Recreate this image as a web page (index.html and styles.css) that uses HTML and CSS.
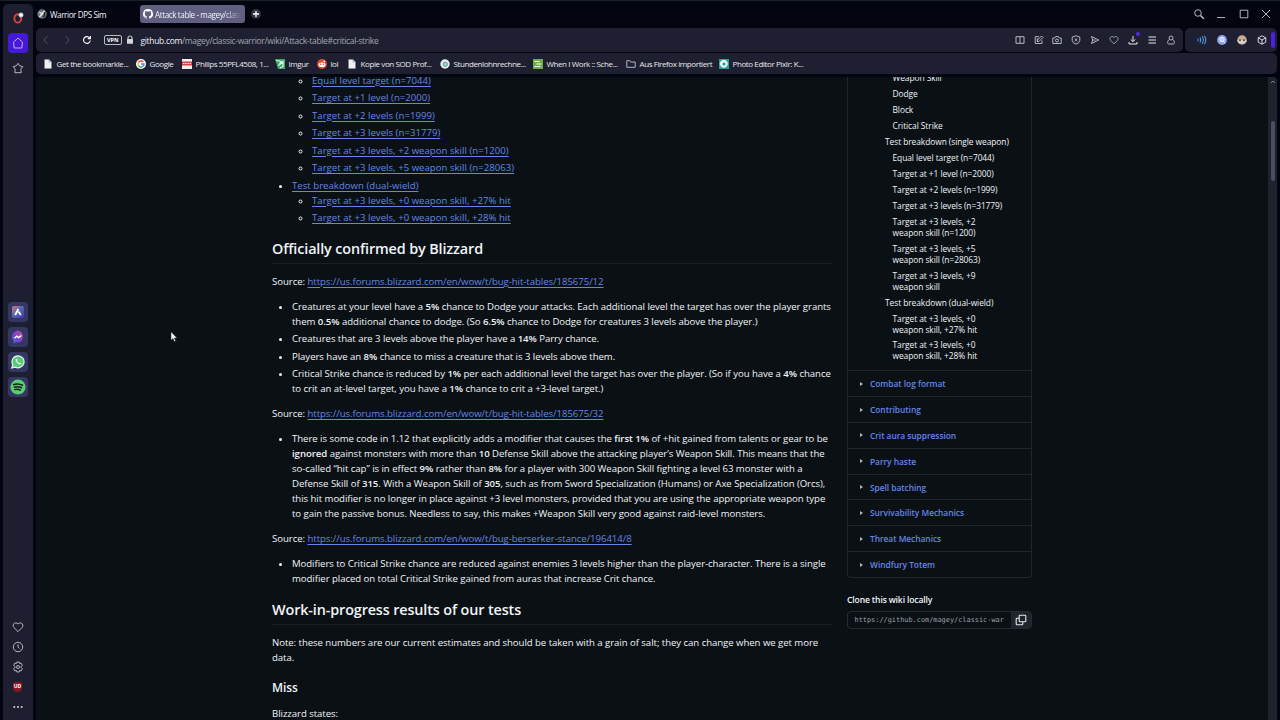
FILE: index.html
```html
<!DOCTYPE html>
<html lang="en">
<head>
    <meta charset="UTF-8">
    <meta name="viewport" content="width=device-width, initial-scale=1.0">
    <title>Attack table - magey/classic-warrior Wiki</title>
    <link rel="stylesheet" href="styles.css">
</head>
<body>
    <div class="browser">
        <!-- Left browser sidebar -->
        <aside class="rail">
            <div class="rail-group">
                <div class="rail-item">
                    <svg class="icon-12" viewBox="0 0 12 12"><ellipse cx="5.8" cy="6.4" rx="3.4" ry="4.2" fill="none" stroke="#d8403f" stroke-width="2"/><circle cx="9" cy="3" r="2.1" fill="#fff"/></svg>
                </div>
                <div class="rail-item home">
                    <svg class="icon-12" viewBox="0 0 12 12"><path d="M1.5 5.2 6 1l4.500 4.200-.7 5.800H2.200z"/></svg>
                </div>
                <div class="rail-item">
                    <svg class="icon-12" viewBox="0 0 12 12"><path d="m6 1.300 1.600 2.500 3.200.8-2 2.500.4 3.600H2.800l.4-3.600-2-2.500 3.200-.8z"/></svg>
                </div>
            </div>
            <div class="rail-group apps">
                <div class="rail-item app">
                    <svg class="icon-14" viewBox="0 0 14 14">
                        <defs><linearGradient id="aria" x1="0" y1="0" x2="1" y2="1"><stop offset="0" stop-color="#d27a6c"/><stop offset=".5" stop-color="#5068b8"/><stop offset="1" stop-color="#4a2fb0"/></linearGradient></defs>
                        <rect x="1" y="1" width="12" height="12" rx="2" fill="url(#aria)" stroke="none"/>
                        <path d="M4.200 10 7.300 4M7.500 6.500 9.800 10" stroke="#fff" stroke-width="1.800"/>
                    </svg>
                </div>
                <div class="rail-item app">
                    <svg class="icon-14" viewBox="0 0 14 14">
                        <defs><linearGradient id="msg" x1="1" y1="0" x2="0" y2="1"><stop offset="0" stop-color="#d2508c"/><stop offset=".5" stop-color="#8040c8"/><stop offset="1" stop-color="#3c6ae0"/></linearGradient></defs>
                        <path d="M7 .8a6 6 0 0 1 0 11.800l-2-.3-2.500 1V10.800A6 6 0 0 1 7 .8z" fill="url(#msg)" stroke="none"/>
                        <path d="m3.500 8.300 2.300-2.200 2 1.400 2.500-2" stroke="#fff" stroke-width="1.500"/>
                    </svg>
                </div>
                <div class="rail-item app">
                    <svg class="icon-14" viewBox="0 0 14 14">
                        <path d="M7.200.8a6 6 0 1 1-3 11.300L.8 13l1-3.200A6 6 0 0 1 7.200.8z" fill="#58cb75" stroke="#e8f4ea" stroke-width="1.200"/>
                        <path d="M4.700 4.500c-.3 2 2.700 5.200 4.800 5l.8-1.200-1.600-.9-.8.7C7 7.700 6.300 7 6 6.200l.7-.8-.8-1.600z" fill="#fff" stroke="none"/>
                    </svg>
                </div>
                <div class="rail-item app">
                    <svg class="icon-16" viewBox="0 0 16 16">
                        <circle cx="8" cy="8" r="7.600" fill="#5ccb73" stroke="none"/>
                        <path d="M3 5.700c3.500-1.100 7.200-.8 10 .8M3.700 8.200c3-.9 6-.6 8.300.8M4.300 10.600c2.400-.7 4.700-.4 6.500.7" stroke="#112018" stroke-width="1.500"/>
                    </svg>
                </div>
            </div>
            <div class="rail-group bottom">
                <div class="rail-item"><svg class="icon-12" viewBox="0 0 12 12"><path d="M6 10.600 1.900 6.500C-.3 4 2.800-.2 6 3c3.200-3.200 6.300 1 4.100 3.500z"/></svg></div>
                <div class="rail-item"><svg class="icon-12" viewBox="0 0 12 12"><circle cx="6" cy="6" r="4.700"/><path d="M6 3.300V6l1.500 1.500"/></svg></div>
                <div class="rail-item"><svg class="icon-12" viewBox="0 0 12 12"><path d="m4.800 1h2.400l.4 1.500 1.500-.4 1.200 2.100L9.200 5.300v1.400l1.100 1.100-1.200 2.100-1.500-.4-.4 1.500H4.800l-.4-1.500-1.500.4-1.200-2.100 1.100-1.100V5.300L1.700 4.200l1.200-2.100 1.500.4z"/><circle cx="6" cy="6" r="1.500"/></svg></div>
                <div class="rail-item"><span class="shield">UD</span></div>
                <div class="rail-item"><svg class="icon-12" viewBox="0 0 12 12"><g fill="#d0d2da" stroke="none"><circle cx="2.300" cy="6" r="1"/><circle cx="6" cy="6" r="1"/><circle cx="9.700" cy="6" r="1"/></g></svg></div>
            </div>
        </aside>

        <div class="window">
            <!-- Tabs -->
            <div class="tabs">
                <div class="tab">
                    <svg class="icon-10" viewBox="0 0 10 10"><circle cx="5" cy="5" r="4.700" fill="#70757c" stroke="none"/><path d="m2.500 8 5-6M2.300 3.500l3.200 1.200" stroke="#eee" stroke-width="1.300"/><path d="M7.500 3v3.500L6 8" stroke="#222" stroke-width="1.200"/></svg>
                    <span>Warrior DPS Sim</span>
                </div>
                <div class="tab active">
                    <svg class="icon-10" viewBox="0 0 16 16"><path fill="#fff" stroke="none" d="M8 0a8 8 0 0 0-2.530 15.590c.4.070.55-.17.55-.38v-1.490c-2.010.37-2.530-.49-2.690-.94-.09-.23-.48-.94-.82-1.130-.28-.15-.68-.52-.01-.53.630-.01 1.080.58 1.230.82.72 1.210 1.870.87 2.330.66.07-.52.28-.87.51-1.070-1.780-.2-3.640-.89-3.640-3.950 0-.87.31-1.590.82-2.150-.08-.2-.36-1.020.08-2.120 0 0 .67-.21 2.200.82a7.500 7.500 0 0 1 4 0c1.530-1.040 2.200-.82 2.200-.82.44 1.100.16 1.920.08 2.120.51.56.82 1.270.82 2.150 0 3.070-1.870 3.750-3.650 3.950.29.25.54.73.54 1.480v2.200c0 .21.15.46.55.38A8 8 0 0 0 8 0z"/></svg>
                    <span>Attack table - magey/class</span>
                </div>
                <div class="new-tab"><svg class="icon-10" viewBox="0 0 10 10"><path d="M5 2v6M2 5h6" stroke="#fff" stroke-width="1.300"/></svg></div>
                <div class="window-controls">
                    <svg class="icon-12" viewBox="0 0 12 12"><circle cx="5" cy="5" r="3.300"/><path d="m7.500 7.500 3.300 3.300" stroke-width="1.400"/></svg>
                    <svg class="icon-12" viewBox="0 0 12 12"><path d="M2 9.500h8"/></svg>
                    <svg class="icon-12" viewBox="0 0 12 12"><path d="M2.200 2.200h7.600v7.600H2.200z"/></svg>
                    <svg class="icon-12" viewBox="0 0 12 12"><path d="m2 2 8 8m0-8-8 8"/></svg>
                </div>
            </div>

            <!-- Address bar -->
            <div class="toolbar">
                <div class="address">
                    <div class="nav">
                        <svg class="icon-10 dim" viewBox="0 0 10 10"><path d="M6 1.500 3 5l3 3.500"/></svg>
                        <svg class="icon-10 dim" viewBox="0 0 10 10"><path d="m4 1.500 3 3.500-3 3.500"/></svg>
                        <svg class="icon-10" viewBox="0 0 10 10"><path d="M8.300 5.500A3.400 3.400 0 1 1 7.700 3M8.400 1v2.600H5.800" stroke="#fff" stroke-width="1.100"/></svg>
                    </div>
                    <span class="vpn">VPN</span>
                    <svg class="lock" viewBox="0 0 8 10"><path d="M2 4.500V3a2 2 0 0 1 4 0v1.500" stroke-width="1.200"/><rect x="1" y="4" width="6" height="4.700" rx=".5" fill="#d5d6dc" stroke="none"/></svg>
                    <span class="url"><b>github.com</b>/magey/classic-warrior/wiki/Attack-table#critical-strike</span>
                    <div class="actions">
                        <svg class="icon-10" viewBox="0 0 10 10"><path d="M1 1.700h8v6.600H1zM5 1.700v6.600"/></svg>
                        <svg class="icon-10" viewBox="0 0 10 10"><path d="M5 1.700H1.200v6.800H8V5.500M3.500 6.500V5l4-4L9 2.500l-4 4zM3.300 3.300v3.500"/></svg>
                        <svg class="icon-10" viewBox="0 0 10 10"><path d="M.8 3h2L3.700 1.500h2.600L7.200 3h2v5.500H.8z"/><circle cx="5" cy="5.500" r="1.500"/></svg>
                        <svg class="icon-10" viewBox="0 0 10 10"><path d="M5 .8 8.800 2v3.500Q8.500 8 5 9.200 1.500 8 1.200 5.500V2zM3.700 3.500l2.600 2.600m0-2.600L3.700 6.100"/></svg>
                        <svg class="icon-10" viewBox="0 0 10 10"><path d="M1.500 1.500 8.700 5 1.500 8.500 2.700 5zM2.700 5h3"/></svg>
                        <svg class="icon-10" viewBox="0 0 12 12"><path d="M6 10.600 1.900 6.500C-.3 4 2.800-.2 6 3c3.200-3.200 6.300 1 4.100 3.500z"/></svg>
                        <span class="download">
                            <svg class="icon-10" viewBox="0 0 10 10"><path d="M5 1v5.500M2.800 4.500 5 6.700l2.200-2.200M1 7v2h8V7" stroke="#fff"/></svg>
                        </span>
                        <svg class="icon-10" viewBox="0 0 10 10"><path d="M1.500 2h7.500M1.500 5h7.500M1.500 8h7.500" stroke="#fff"/></svg>
                        <svg class="icon-10" viewBox="0 0 10 10"><circle cx="5" cy="3" r="2"/><path d="M3.500 4.500C.6 6 1.800 9 2.500 9h5c.7 0 1.900-3-1-4.500"/></svg>
                    </div>
                </div>
                <div class="extensions">
                    <svg class="icon-10" viewBox="0 0 10 10"><path d="M1 3.800v2.400M3 2.500q1.200 2.500 0 5M5.300 1.300q2 3.700 0 7.400M7.500.8q2.500 4.200 0 8.400" stroke="#4f9be8" stroke-width="1.100"/></svg>
                    <svg class="icon-10" viewBox="0 0 10 10"><circle cx="5" cy="5" r="4.900" fill="#8ea2ec" stroke="none"/><circle cx="5" cy="4.500" r="2.200" fill="#bfd0ff" stroke="#f3f6ff"/><path d="M6.500 6.300 8 8" stroke="#f3f6ff"/></svg>
                    <svg class="icon-10" viewBox="0 0 10 10"><circle cx="5" cy="5" r="4.700" fill="#c9ad8a" stroke="none"/><path d="M.6 5h8.800v1.300a4.500 3 0 0 1-8.800 0z" fill="#d6d2cf" stroke="none"/><circle cx="3" cy="5.300" r="1" fill="#56483e" stroke="none"/><circle cx="7" cy="5.300" r="1" fill="#56483e" stroke="none"/></svg>
                    <svg class="icon-10" viewBox="0 0 10 10"><path d="M5 .8 8.800 2.800v4.400L5 9.200 1.200 7.200V2.800zM1.200 2.800 5 5l3.800-2.200M5 5v4.200" stroke="#e8e8ee"/></svg>
                    <span class="handle"></span>
                </div>
            </div>

            <!-- Bookmarks -->
            <div class="bookmarks">
                <div class="bookmark long"><svg class="icon-10" viewBox="0 0 10 10"><path d="M1.500.5h4.500l2.500 2.500v6.500h-7z" fill="#eef0f4" stroke="none"/><path d="M6 .5V3h2.500" stroke="#8c90a0" stroke-width=".6"/></svg><span>Get the bookmarkle...</span></div>
                <div class="bookmark google"><svg class="icon-10" viewBox="0 0 10 10"><circle cx="5" cy="5" r="5" fill="#fff" stroke="none"/><path d="M7.300 3A3 3 0 0 0 2.400 3.500" stroke="#ea4335" stroke-width="1.400"/><path d="M2.400 3.500a3 3 0 0 0 0 3" stroke="#fbbc05" stroke-width="1.400"/><path d="M2.400 6.500A3 3 0 0 0 7 7.200" stroke="#34a853" stroke-width="1.400"/><path d="M5 5h3c0 1-.4 1.800-1 2.200" stroke="#4285f4" stroke-width="1.400"/></svg><span>Google</span></div>
                <div class="bookmark long"><svg class="icon-10" viewBox="0 0 10 10"><path d="M0 0h10v10H0z" fill="#f1eded" stroke="none"/><path d="M0 2.500h10v4H0z" fill="#d4434b" stroke="none"/><path d="M1 4.500h8" stroke="#fff" stroke-dasharray="1.500 .7"/></svg><span>Philips 55PFL4508, 1...</span></div>
                <div class="bookmark imgur"><svg class="icon-10" viewBox="0 0 10 10"><path d="M0 0h10v10H3z" fill="#35a965" stroke="none"/><path d="m1 1.500 5 1L3.500 7M5 5.500l3-3v5L5 9" stroke="#e5f6e9" stroke-width="1.200"/></svg><span>Imgur</span></div>
                <div class="bookmark lol"><svg class="icon-10" viewBox="0 0 10 10"><circle cx="5" cy="5" r="5" fill="#e3492b" stroke="none"/><ellipse cx="5" cy="5.800" rx="3.500" ry="2.400" fill="#fff" stroke="none"/><circle cx="7.300" cy="2.300" r=".9" fill="#fff" stroke="none"/><circle cx="3.700" cy="5.300" r=".7" fill="#e3492b" stroke="none"/><circle cx="6.300" cy="5.300" r=".7" fill="#e3492b" stroke="none"/></svg><span>lol</span></div>
                <div class="bookmark long"><svg class="icon-10" viewBox="0 0 10 10"><path d="M1.500.5h4.500l2.500 2.500v6.500h-7z" fill="#eef0f4" stroke="none"/><path d="M6 .5V3h2.500" stroke="#8c90a0" stroke-width=".6"/></svg><span>Kopie von SOD Prof...</span></div>
                <div class="bookmark long"><svg class="icon-10" viewBox="0 0 10 10"><circle cx="5" cy="5" r="4.700" fill="#e7edf0" stroke="none"/><circle cx="5.300" cy="5.300" r="2.200" fill="#a4c9c9" stroke="#5c979d"/></svg><span>Stundenlohnrechne...</span></div>
                <div class="bookmark long"><svg class="icon-10" viewBox="0 0 10 10"><path d="M0 0h10v10H0z" fill="#6cae42" stroke="none"/><path d="M1.500 2.500h5M3.500 5h5M1.500 7.500h6" stroke="#fff" stroke-width="1.100"/></svg><span>When I Work :: Sche...</span></div>
                <div class="bookmark long"><svg class="icon-10" viewBox="0 0 10 10"><path d="M.8 1.700h3l1 1.300h4.400v5.300H.8z"/></svg><span>Aus Firefox importiert</span></div>
                <div class="bookmark long"><svg class="icon-10" viewBox="0 0 10 10"><path d="M0 0h10v10H0z" fill="#2d9c93" stroke="none"/><path d="M5 .8a4 4 0 0 1 3.500 5.500A4 4 0 0 1 1.500 7 4 4 0 0 1 5 .8z" fill="#e9f5f4" stroke="none"/><circle cx="5" cy="5" r="1.600" fill="#2d9c93" stroke="none"/></svg><span>Photo Editor Pixlr: K...</span></div>
            </div>

            <!-- Page -->
            <div class="page">
                <main class="wiki">
                    <ul class="toc">
                        <li class="nested">
                            <ul>
                                <li><a href="#">Equal level target (n=7044)</a></li>
                                <li><a href="#">Target at +1 level (n=2000)</a></li>
                                <li><a href="#">Target at +2 levels (n=1999)</a></li>
                                <li><a href="#">Target at +3 levels (n=31779)</a></li>
                                <li><a href="#">Target at +3 levels, +2 weapon skill (n=1200)</a></li>
                                <li><a href="#">Target at +3 levels, +5 weapon skill (n=28063)</a></li>
                            </ul>
                        </li>
                        <li><a href="#">Test breakdown (dual-wield)</a>
                            <ul>
                                <li><a href="#">Target at +3 levels, +0 weapon skill, +27% hit</a></li>
                                <li><a href="#">Target at +3 levels, +0 weapon skill, +28% hit</a></li>
                            </ul>
                        </li>
                    </ul>

                    <h2>Officially confirmed by Blizzard</h2>
                    <p>Source: <a href="#">https://us.forums.blizzard.com/en/wow/t/bug-hit-tables/185675/12</a></p>
                    <ul>
                        <li>Creatures at your level have a <strong>5%</strong> chance to Dodge your attacks. Each additional level the target has over the player grants<br>them <strong>0.5%</strong> additional chance to dodge. (So <strong>6.5%</strong> chance to Dodge for creatures 3 levels above the player.)</li>
                        <li>Creatures that are 3 levels above the player have a <strong>14%</strong> Parry chance.</li>
                        <li>Players have an <strong>8%</strong> chance to miss a creature that is 3 levels above them.</li>
                        <li>Critical Strike chance is reduced by <strong>1%</strong> per each additional level the target has over the player. (So if you have a <strong>4%</strong> chance<br>to crit an at-level target, you have a <strong>1%</strong> chance to crit a +3-level target.)</li>
                    </ul>
                    <p>Source: <a href="#">https://us.forums.blizzard.com/en/wow/t/bug-hit-tables/185675/32</a></p>
                    <ul>
                        <li>There is some code in 1.12 that explicitly adds a modifier that causes the <strong>first 1%</strong> of +hit gained from talents or gear to be<br><strong>ignored</strong> against monsters with more than <strong>10</strong> Defense Skill above the attacking player’s Weapon Skill. This means that the<br>so-called “hit cap” is in effect <strong>9%</strong> rather than <strong>8%</strong> for a player with 300 Weapon Skill fighting a level 63 monster with a<br>Defense Skill of <strong>315</strong>. With a Weapon Skill of <strong>305</strong>, such as from Sword Specialization (Humans) or Axe Specialization (Orcs),<br>this hit modifier is no longer in place against +3 level monsters, provided that you are using the appropriate weapon type<br>to gain the passive bonus. Needless to say, this makes +Weapon Skill very good against raid-level monsters.</li>
                    </ul>
                    <p>Source: <a href="#">https://us.forums.blizzard.com/en/wow/t/bug-berserker-stance/196414/8</a></p>
                    <ul>
                        <li>Modifiers to Critical Strike chance are reduced against enemies 3 levels higher than the player-character. There is a single<br>modifier placed on total Critical Strike gained from auras that increase Crit chance.</li>
                    </ul>

                    <h2>Work-in-progress results of our tests</h2>
                    <p>Note: these numbers are our current estimates and should be taken with a grain of salt; they can change when we get more<br>data.</p>
                    <h3>Miss</h3>
                    <p>Blizzard states:</p>
                </main>

                <aside class="wiki-side">
                    <div class="pages-box">
                        <ul class="outline">
                            <li class="sub">Weapon Skill</li>
                            <li class="sub">Dodge</li>
                            <li class="sub">Block</li>
                            <li class="sub">Critical Strike</li>
                            <li>Test breakdown (single weapon)</li>
                            <li class="sub">Equal level target (n=7044)</li>
                            <li class="sub">Target at +1 level (n=2000)</li>
                            <li class="sub">Target at +2 levels (n=1999)</li>
                            <li class="sub">Target at +3 levels (n=31779)</li>
                            <li class="sub">Target at +3 levels, +2<br>weapon skill (n=1200)</li>
                            <li class="sub">Target at +3 levels, +5<br>weapon skill (n=28063)</li>
                            <li class="sub">Target at +3 levels, +9<br>weapon skill</li>
                            <li>Test breakdown (dual-wield)</li>
                            <li class="sub">Target at +3 levels, +0<br>weapon skill, +27% hit</li>
                            <li class="sub">Target at +3 levels, +0<br>weapon skill, +28% hit</li>
                        </ul>
                        <div class="page-row"><a href="#">Combat log format</a></div>
                        <div class="page-row"><a href="#">Contributing</a></div>
                        <div class="page-row"><a href="#">Crit aura suppression</a></div>
                        <div class="page-row"><a href="#">Parry haste</a></div>
                        <div class="page-row"><a href="#">Spell batching</a></div>
                        <div class="page-row"><a href="#">Survivability Mechanics</a></div>
                        <div class="page-row"><a href="#">Threat Mechanics</a></div>
                        <div class="page-row"><a href="#">Windfury Totem</a></div>
                    </div>
                    <h5>Clone this wiki locally</h5>
                    <div class="clone">
                        <span class="clone-url">https://github.com/magey/classic-war</span>
                        <button class="copy" aria-label="Copy">
                            <svg class="icon-12" viewBox="0 0 12 12"><rect x="4.200" y="1.200" width="6.600" height="6.600" rx=".8"/><path d="M4 4.200H2a.8.8 0 0 0-.8.8v5c0 .5.3.8.8.8h5c.5 0 .8-.3.800-.8V8"/></svg>
                        </button>
                    </div>
                </aside>

                <div class="scrollbar">
                    <svg class="scroll-arrow" viewBox="0 0 6 6"><path d="m1 4 2-2 2 2" stroke="#8a8d96"/></svg>
                    <div class="thumb"></div>
                </div>
            </div>
        </div>
    </div>

    <svg class="cursor" viewBox="0 0 8 12"><path d="M1 .8v8.400l2-1.700 1.200 3 1.400-.6-1.200-2.800h2.600z" fill="#fff" stroke="#222" stroke-width=".5"/></svg>
</body>
</html>
```
FILE: styles.css
```css
* {
    box-sizing: border-box;
}
body {
    margin: 0;
    background: #020510;
    color: #f0f4f8;
    font-family: "Open Sans", "Noto Sans", sans-serif;
    font-size: 9.6px;
    overflow: hidden;
}
svg {
    display: block;
    flex: none;
    fill: none;
    stroke: #c3c5cf;
    stroke-width: 0.9;
}
ul {
    margin: 0;
    padding: 0;
}
.icon-10 {
    width: 10px;
    height: 10px;
}
.icon-12 {
    width: 12px;
    height: 12px;
}
.icon-14 {
    width: 14px;
    height: 14px;
}
.icon-16 {
    width: 16px;
    height: 16px;
}
.browser {
    display: flex;
    gap: 3px;
    height: 720px;
    padding: 3px 3px 0 3px;
    border-top: 1px solid #1b1f28;
}

/* Left rail */
.rail {
    display: flex;
    flex-direction: column;
    width: 30px;
    border-radius: 5px 5px 0 0;
    background: #1d1f31;
}
.rail-group {
    display: flex;
    flex-direction: column;
    align-items: center;
    gap: 5px;
    padding-top: 3.500px;
}
.rail-item {
    display: flex;
    align-items: center;
    justify-content: center;
    width: 20px;
    height: 20px;
    margin-right: 1px;
    border-radius: 4px;
}
.home {
    background: #4419d8;
}
.home svg {
    stroke: #c9bfff;
}
.apps {
    margin-top: 221px;
}
.app {
    background: #343762;
}
.bottom {
    gap: 0;
    margin-top: auto;
    padding-bottom: 3px;
}
.shield {
    width: 9px;
    height: 10px;
    border-radius: 2px 2px 5px 5px;
    background: #8c1720;
    color: #fff;
    font-size: 5px;
    font-weight: 700;
    line-height: 9px;
    text-align: center;
}

/* Tabs */
.window {
    flex: 1;
    min-width: 0;
    display: flex;
    flex-direction: column;
}
.tabs {
    display: flex;
    align-items: center;
    height: 20px;
    margin-bottom: 4px;
    font-size: 8.1px;
    letter-spacing: -0.4px;
}
.tab {
    display: flex;
    align-items: center;
    gap: 3px;
    width: 104px;
    height: 18px;
    padding-left: 1px;
    white-space: nowrap;
}
.tab.active {
    width: 105px;
    padding: 0 4px 0 3px;
    border-radius: 3px;
    background: #605f82;
    gap: 2px;
}
.tab.active span {
    -webkit-mask-image: linear-gradient(90deg, #000 80%, transparent);
    mask-image: linear-gradient(90deg, #000 80%, transparent);
}
.new-tab {
    margin-left: 6px;
    border-radius: 50%;
    background: #34353f;
}
.window-controls {
    display: flex;
    gap: 10.5px;
    margin: 0 5px 0 auto;
}

/* Address bar */
.toolbar {
    display: flex;
    gap: 2px;
    height: 24px;
    margin-bottom: 1px;
}
.address {
    flex: 1;
    display: flex;
    align-items: center;
    padding: 0 7.500px 0 5px;
    border-radius: 5px;
    background: #1e2031;
}
.nav {
    display: flex;
    gap: 10.500px;
    padding-right: 12px;
}
.dim {
    stroke: #595b69;
}
.vpn {
    padding: 0 2px;
    border: 1px solid #b9bac4;
    border-radius: 2px;
    color: #fff;
    font-size: 5.500px;
    font-weight: 700;
    line-height: 8px;
}
.lock {
    width: 8px;
    height: 10px;
    margin: 0 7px 0 4px;
}
.url {
    color: #a3a5b0;
    font-size: 8.500px;
    letter-spacing: -0.320px;
    white-space: nowrap;
}
.url b {
    color: #eceef3;
    font-weight: 400;
}
.actions {
    display: flex;
    gap: 8.850px;
    margin-left: auto;
}
.download {
    position: relative;
}
.download::after {
    content: "";
    position: absolute;
    top: -3px;
    right: -2px;
    width: 4px;
    height: 4px;
    border-radius: 50%;
    background: #5227f0;
}
.extensions {
    display: flex;
    align-items: center;
    gap: 10px;
    width: 92px;
    padding-left: 11.500px;
    border-radius: 5px;
    background: #1e2031;
}
.handle {
    width: 4px;
    height: 16px;
    margin-left: -6px;
    border-radius: 2px;
    background: #4b20df;
}

/* Bookmarks */
.bookmarks {
    display: flex;
    align-items: center;
    gap: 8px;
    height: 21px;
    margin-bottom: 3px;
    padding-left: 7px;
    border-radius: 5px;
    background: #1e2031;
    color: #e8e9ef;
    font-size: 8px;
    letter-spacing: -0.4px;
    white-space: nowrap;
}
.bookmark {
    display: flex;
    gap: 3.500px;
    align-items: center;
    width: 38px;
}
.bookmark.long {
    width: 85px;
}
.bookmark.imgur {
    width: 34px;
}
.bookmark.lol {
    width: 22px;
}

/* Wiki content */
.page {
    flex: 1;
    min-height: 0;
    display: flex;
    overflow: hidden;
    border-radius: 4px 4px 0 0;
    background: #0b1014;
}
.wiki {
    width: 560px;
    margin-top: -4.500px;
    margin-left: 236px;
    letter-spacing: -0.05px;
    line-height: 15px;
    white-space: nowrap;
}
.wiki a {
    color: #6485ec;
    text-decoration: underline;
    text-underline-offset: 2px;
}
.wiki ul {
    padding-left: 20px;
}
.wiki .toc {
    letter-spacing: 0.020px;
}
.wiki li + li {
    margin-top: 2.5px;
}
.wiki li.nested {
    list-style: none;
}
.wiki p,
.wiki > ul {
    margin: 0 0 10px;
}
.wiki strong {
    font-weight: 600;
}
.wiki h2 {
    margin: 15px 0 10px;
    padding-bottom: 4px;
    border-bottom: 1px solid #1b2025;
    font-size: 14.4px;
    font-weight: 600;
    letter-spacing: -0.13px;
    line-height: 18.75px;
}
.wiki h3 {
    margin: 15px 0 10px;
    font-size: 12px;
    font-weight: 600;
    line-height: 15.6px;
}

/* Wiki sidebar */
.wiki-side {
    width: 185px;
    margin-left: 15px;
    font-size: 8.4px;
}
.pages-box {
    border: 1px solid #20262b;
    border-top: 0;
    border-radius: 0 0 4px 4px;
}
.outline {
    height: 298px;
    margin-top: -4.700px;
    padding-left: 37px;
    letter-spacing: -0.06px;
    line-height: 11px;
    list-style: none;
    white-space: nowrap;
}
.outline li {
    margin-bottom: 4.950px;
}
.outline .sub {
    padding-left: 7.500px;
}
.page-row {
    display: flex;
    align-items: center;
    gap: 7px;
    height: 25.830px;
    padding-left: 12px;
    border-top: 1px solid #20262b;
}
.page-row::before {
    content: "";
    border: 2px solid transparent;
    border-left: 3px solid #b0b6be;
    border-right: 0;
}
.page-row a {
    color: #6485ec;
    font-weight: 600;
    letter-spacing: -0.03px;
    text-decoration: none;
}
.wiki-side h5 {
    margin: 16px 0 4px;
    font-size: 8.600px;
    font-weight: 600;
    letter-spacing: -0.15px;
    line-height: 13px;
}
.clone {
    display: flex;
    height: 18px;
    border: 1px solid #262b33;
    border-radius: 4px;
    overflow: hidden;
}
.clone-url {
    flex: 1;
    padding-left: 6.500px;
    color: #9ba1a9;
    font-family: "DejaVu Sans Mono", monospace;
    font-size: 6.9px;
    line-height: 16px;
    white-space: nowrap;
}
.copy {
    display: flex;
    align-items: center;
    justify-content: center;
    width: 20px;
    padding: 0;
    border: 0;
    background: #21262d;
}
.copy svg {
    stroke: #e3e6ea;
    stroke-width: 1.1;
}

/* Scrollbar */
.scrollbar {
    width: 9px;
    margin-left: auto;
    background: #20232e;
}
.scroll-arrow {
    width: 6px;
    height: 6px;
    margin: 2px auto 0;
}
.thumb {
    width: 4px;
    height: 60px;
    margin: 36px auto 0;
    border-radius: 2px;
    background: #4b4e5c;
}

.cursor {
    position: absolute;
    top: 331px;
    left: 170px;
    width: 8px;
    height: 12px;
}
```
